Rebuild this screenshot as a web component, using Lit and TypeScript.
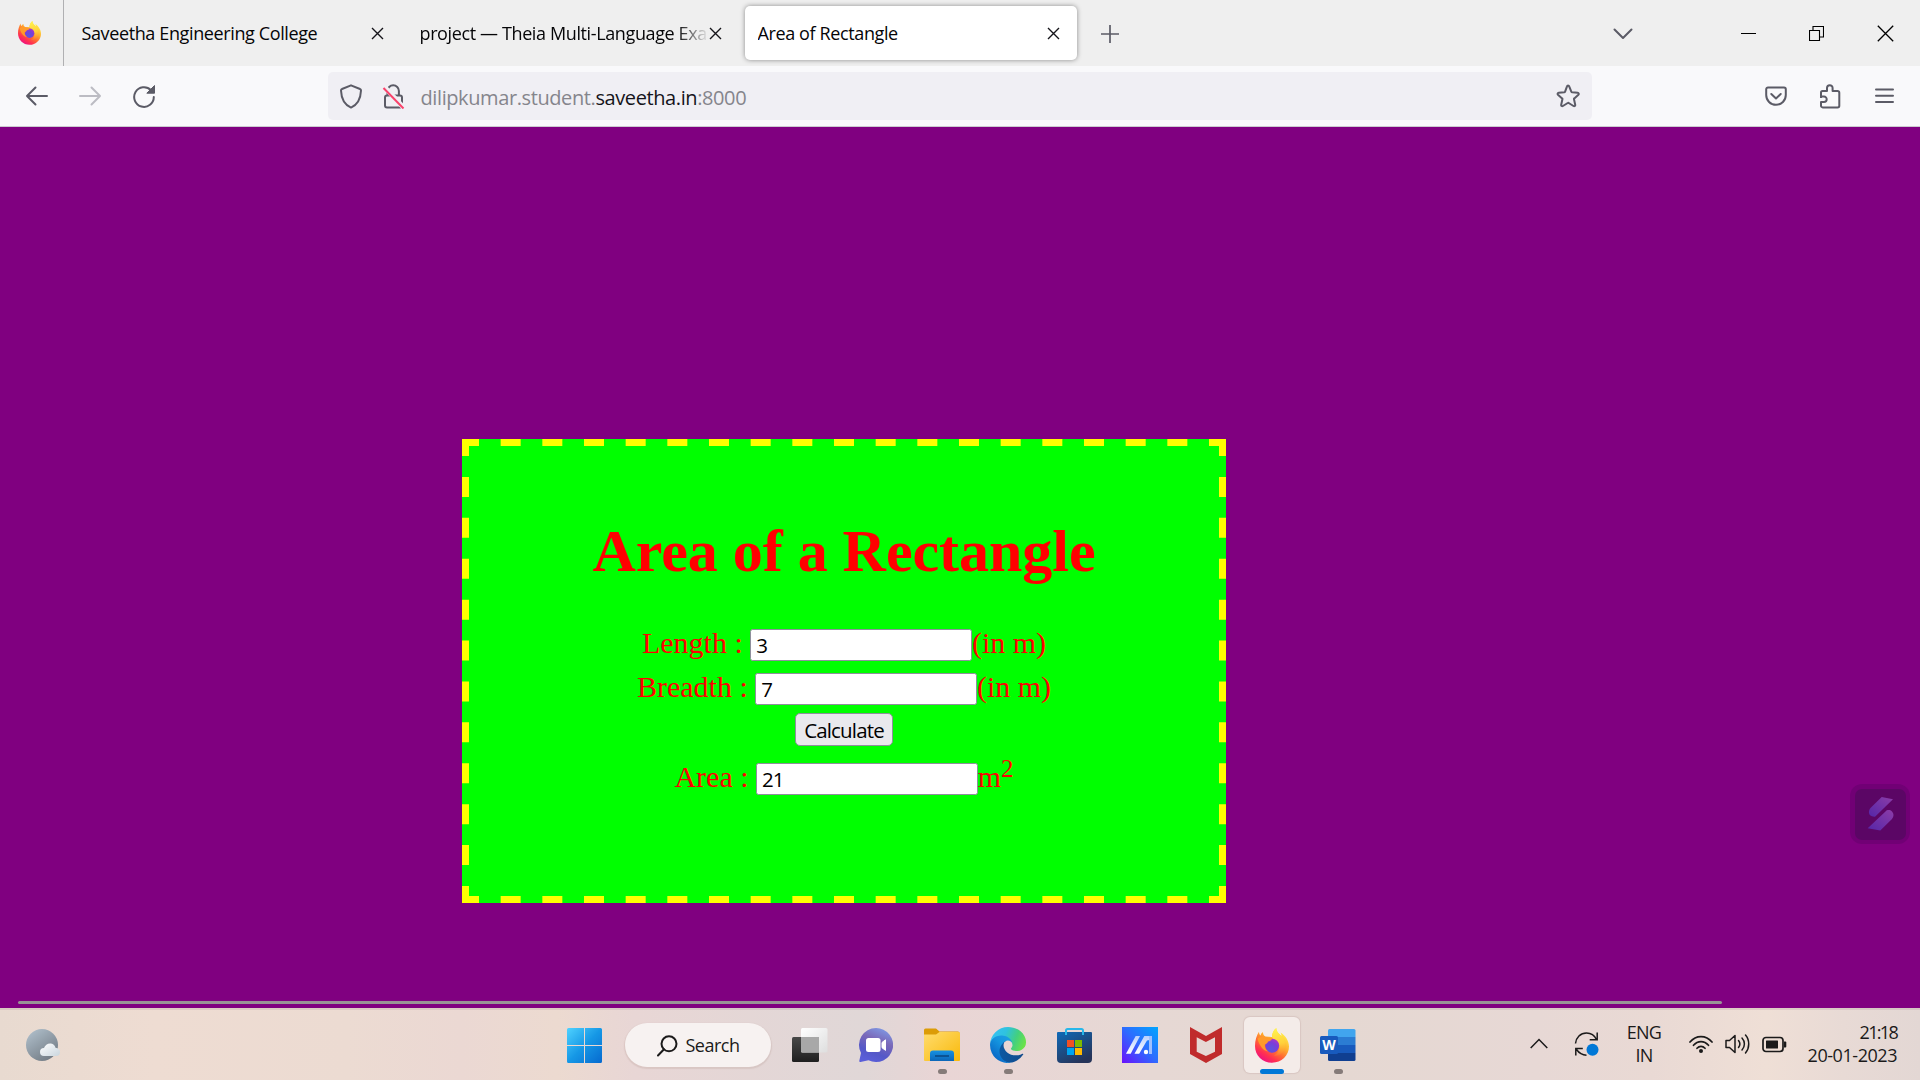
import { LitElement, html, css, svg, type TemplateResult } from "lit";
import { customElement, state } from "lit/decorators.js";
import { classMap } from "lit/directives/class-map.js";

const icon = (w: number, h: number, body: TemplateResult) =>
  html`<svg width=${w} height=${h} viewBox="0 0 ${w} ${h}" fill="none">${body}</svg>`;

const sans = css`"Open Sans", "Noto Sans", sans-serif`;

const firefox = (w: number, h: number) => html`
  <svg width=${w} height=${h} viewBox="0 0 34 35" preserveAspectRatio="none" fill="none">
    <defs>
      <linearGradient id="ffBody" x1="27" y1="4" x2="8" y2="32" gradientUnits="userSpaceOnUse">
        <stop offset="0" stop-color="#fff04a" /><stop offset=".35" stop-color="#ffb02e" />
        <stop offset=".6" stop-color="#ff6a33" /><stop offset=".82" stop-color="#ff2f52" /><stop offset="1" stop-color="#f0157c" />
      </linearGradient>
      <linearGradient id="ffFlame" x1="22" y1="0" x2="28" y2="28" gradientUnits="userSpaceOnUse">
        <stop offset="0" stop-color="#fff44f" /><stop offset=".55" stop-color="#ffd13b" /><stop offset="1" stop-color="#ff8a2b" stop-opacity=".2" />
      </linearGradient>
      <radialGradient id="ffGlobe" cx=".4" cy=".75" r=".8">
        <stop offset="0" stop-color="#5b55e0" /><stop offset=".6" stop-color="#7a3fd8" /><stop offset="1" stop-color="#b235c8" />
      </radialGradient>
    </defs>
    <path fill="url(#ffBody)" d="M4 3.800C4 6 4.800 7 5.600 7.400 6 5.600 7 4.500 8 4.200 8 6 8.600 7.400 10.500 8.600L17 9C17 5.500 18.500 2 21.300 0 21.300 3.500 24 5.800 26.500 8 26.500 6.500 26 5.500 25.500 4.500 30.500 7.500 34 13 34 18.600 34 27.500 26.500 34.800 17 34.800S0 27.500 0 18C0 12.500 1.500 7.500 4 3.800Z" />
    <path fill="url(#ffFlame)" d="M17 9C17 5.500 18.500 2 21.300 0 21.300 3.500 24 5.800 26.500 8 30 12 31.500 17 29 22.500 27 27 22 28.500 19 27.500 24 25 25.500 20 23.500 15.500 22 12 18 11.500 17 9Z" />
    <circle cx="17.200" cy="17.800" r="7" fill="url(#ffGlobe)" />
    <path fill="#ff9a2a" d="M2.500 10.500C5 8.500 9 8 12.500 9.600 14.500 9.200 16 9.600 17 10.400 16.600 12.300 14.800 13 13 13.500 12.600 15.300 11 16 9.800 16.500 9.500 19 10.800 22 13.500 23.500 8 23 4 17 2.500 10.500Z" />
  </svg>`;

const closeX = icon(13, 13, svg`<path d="M1 1l11 11M12 1L1 12" stroke="#15141a" stroke-width="1.400" />`);

@customElement("browser-tabs")
class BrowserTabs extends LitElement {
  static styles = css`
    :host { display: flex; height: 66px; background: #efefef; font: 18px/55px ${sans}; letter-spacing: -0.380px; color: #050507; }
    svg { display: block; flex: none; }
    .pinned { width: 64px; display: flex; align-items: center; padding-left: 18px; box-sizing: border-box; border-right: 1px solid #b0b0b2; }
    .tabs { display: flex; gap: 6px; padding: 6px 0 6px 5px; }
    .tab { width: 332px; height: 54px; box-sizing: border-box; display: flex; align-items: center; padding: 1px 17px 0 12.500px; border-radius: 5px; }
    .tab.active { background: #fff; box-shadow: 0 0 5px rgba(0, 0, 0, 0.42); }
    .title { flex: 1; min-width: 0; overflow: hidden; white-space: nowrap; }
    .title.long { -webkit-mask-image: linear-gradient(to left, transparent, #000 32px); mask-image: linear-gradient(to left, transparent, #000 32px); }
    .btn { width: 69px; display: flex; align-items: center; justify-content: center; padding-top: 1px; box-sizing: border-box; }
    .plus { width: 65px; }
    .spacer { flex: 1; }
    .list { width: 40px; margin-right: 70px; }
  `;
  private tabs = ["Saveetha Engineering College", "project — Theia Multi-Language Exa", "Area of Rectangle"];
  render() {
    return html`
      <div class="pinned">${firefox(23, 24)}</div>
      <div class="tabs">
        ${this.tabs.map((t, i) => html`
          <div class=${classMap({ tab: true, active: i === 2 })}>
            <span class=${classMap({ title: true, long: i === 1 })}>${t}</span>${closeX}
          </div>`)}
      </div>
      <div class="btn plus">${icon(18, 18, svg`<path d="M9 0v18M0 9h18" stroke="#5b5b66" stroke-width="1.700" />`)}</div>
      <div class="spacer"></div>
      <div class="btn list">${icon(20, 12, svg`<path d="M1.500 1.500L10 10l8.500-8.500" stroke="#5b5b66" stroke-width="2" stroke-linecap="round" stroke-linejoin="round" />`)}</div>
      <div class="btn">${icon(16, 2, svg`<path d="M1 .5h15" stroke="#000" />`)}</div>
      <div class="btn">${icon(15, 15, svg`<path d="M.5 4.500h10v10H.5zM4 4.500V.5h10.500V11H11" stroke="#000" stroke-width="1.100" />`)}</div>
      <div class="btn">${icon(17, 17, svg`<path d="M.8.8l15.400 15.400M16.200.8L.8 16.200" stroke="#000" stroke-width="1.300" />`)}</div>`;
  }
}

@customElement("browser-toolbar")
class BrowserToolbar extends LitElement {
  static styles = css`
    :host { display: flex; align-items: center; height: 61px; box-sizing: border-box; padding: 0 9px; background: #f9f9fb; border-bottom: 1px solid #cccbd0; font: 20px/48px ${sans}; letter-spacing: -0.400px; }
    svg { display: block; flex: none; }
    .btn { width: 54px; display: flex; justify-content: center; }
    .back { padding-right: 1px; box-sizing: border-box; }
    .fwd { padding-left: 1px; box-sizing: border-box; }
    .url { width: 1264px; height: 48px; margin-left: 157px; display: flex; align-items: center; border-radius: 5px; background: #f0eff4; color: #85858c; box-sizing: border-box; padding: 0 12px; }
    .lock { margin-left: 20px; }
    .address { flex: 1; margin-left: 15.500px; padding-top: 3px; }
    .host { color: #15141a; }
    .spacer { flex: 1; }
  `;
  render() {
    const c = "#5b5b66";
    return html`
      <div class="btn back">${icon(24, 20, svg`<path d="M11.500 1.500L3 10l8.500 8.500M3 10h20" stroke=${c} stroke-width="2" stroke-linecap="round" stroke-linejoin="round" />`)}</div>
      <div class="btn fwd">${icon(24, 20, svg`<path d="M12.500 1.500L21 10l-8.500 8.500M21 10H1" stroke="#bcbcc3" stroke-width="2" stroke-linecap="round" stroke-linejoin="round" />`)}</div>
      <div class="btn">${icon(24, 24, svg`<path d="M19 6.200A9.800 9.800 0 1 0 21.800 13" stroke=${c} stroke-width="2" stroke-linecap="round" /><path d="M22.500 1.500v7.700h-7.700z" fill=${c} stroke=${c} stroke-linejoin="round" />`)}</div>
      <div class="url">
        ${icon(22, 25, svg`<path d="M11 1.300l9 3.700c.8.300 1 .8 1 1.500C20.700 14 18 20.500 11 23.600 4 20.500 1.300 14 1 6.500 1 5.800 1.200 5.300 2 5z" stroke=${c} stroke-width="2" stroke-linejoin="round" />`)}
        <div class="lock">${icon(23, 25, svg`
          <path d="M5.500 11V7a5.700 5.700 0 0 1 11.400 0v4" stroke=${c} stroke-width="2" />
          <rect x="3" y="11.500" width="17" height="12" rx="2" stroke=${c} stroke-width="2" />
          <path d="M2 2.500L22 24" stroke="#f0eff4" stroke-width="5" />
          <path d="M1.500 4L21.500 24.500" stroke="#f9426b" stroke-width="2" />`)}</div>
        <div class="address">dilipkumar.student.<span class="host">saveetha.in</span>:8000</div>
        ${icon(24, 24, svg`<path d="M12 1.500c.6 0 1 .3 1.200.9l2.200 5.400c.1.300.4.500.7.500l5.600.5c1 .1 1.400 1.200.7 1.900l-4.100 3.700c-.3.200-.4.500-.3.900l1.200 5.500c.2 1-.8 1.700-1.700 1.200l-4.800-3c-.4-.2-.7-.2-1 0l-4.800 3c-.9.500-1.900-.2-1.700-1.200L6.400 15.300c.1-.4 0-.7-.3-.9L2 10.700c-.7-.7-.4-1.800.7-1.900l5.600-.5c.3 0 .6-.2.700-.5l2-5.400c.2-.6.5-.9 1-.9z" stroke=${c} stroke-width="2" stroke-linejoin="round" />`)}
      </div>
      <div class="spacer"></div>
      <div class="btn">${icon(22, 21, svg`<path d="M3 1.500h16a1.800 1.800 0 0 1 1.800 1.800V9a9.800 9.800 0 0 1-19.600 0V3.300A1.800 1.800 0 0 1 3 1.500z" stroke=${c} stroke-width="2" /><path d="M6.300 8L11 12.500 15.700 8" stroke=${c} stroke-width="2" stroke-linecap="round" stroke-linejoin="round" />`)}</div>
      <div class="btn">${icon(22, 26, svg`<path d="M2 15V9.500A1.500 1.500 0 0 1 3.500 8H8V5a2.800 2.800 0 0 1 5.600 0v3h5a1.700 1.700 0 0 1 1.700 1.700v13a1.700 1.700 0 0 1-1.700 1.700H3.700A1.700 1.700 0 0 1 2 22.700V19h3a2.700 2.700 0 0 0 0-5.400H2" stroke=${c} stroke-width="2" stroke-linejoin="round" />`)}</div>
      <div class="btn">${icon(19, 16, svg`<path d="M1 1.500h17M1 7.700h17M1 13.900h17" stroke=${c} stroke-width="2" stroke-linecap="round" />`)}</div>`;
  }
}

@customElement("area-calculator")
class AreaCalculator extends LitElement {
  static styles = css`
    :host { display: block; position: relative; box-sizing: border-box; width: 764px; height: 464px; padding: 78px 7px 7px; background: #00ff00; color: #ff0000; font: 30px/44px "Liberation Serif", serif; }
    .dashes { position: absolute; inset: 0; display: block; }
    h1 { margin: 0 0 36px; font-size: 60px; line-height: 68px; font-weight: bold; text-align: center; letter-spacing: -0.030px; }
    .row { display: flex; justify-content: center; height: 44px; white-space: pre; }
    input { width: 221.700px; height: 32px; margin: 8px 0 0; box-sizing: border-box; border: 1px solid #8f8f9d; border-radius: 2.500px; padding: 0 5px 1px; background: #fff; color: #000; outline: none; font: 20.500px ${sans}; letter-spacing: -0.900px; }
    .submit { display: flex; justify-content: center; padding-top: 4px; height: 42px; box-sizing: content-box; }
    button { width: 97.500px; height: 32.500px; box-sizing: border-box; padding: 1px 0 0; border: 1px solid #8f8f9d; border-radius: 5px; background: #e9e9ed; color: #000; font: 20.500px ${sans}; letter-spacing: -0.850px; white-space: nowrap; }
    sup { font-size: 25px; line-height: 0; position: relative; top: -10px; vertical-align: baseline; }
  `;
  @state() private length = 3;
  @state() private breadth = 7;
  @state() private area = 21;
  private calculate() { this.area = this.length * this.breadth; }
  render() {
    return html`
      <svg class="dashes" width="764" height="464" stroke="#ffff00" stroke-width="7">
        <path d="M0 3.500H764M0 460.500H764" stroke-dasharray="20 21.667" stroke-dashoffset="3" />
        <path d="M3.500 0V464M760.500 0V464" stroke-dasharray="20 20.909" stroke-dashoffset="3" />
      </svg>
      <h1>Area of a Rectangle</h1>
      <div class="row"><span>Length : </span><input .value=${String(this.length)} @input=${(e: any) => (this.length = +e.target.value)} /><span>(in m)</span></div>
      <div class="row"><span>Breadth : </span><input .value=${String(this.breadth)} @input=${(e: any) => (this.breadth = +e.target.value)} /><span>(in m)</span></div>
      <div class="submit"><button @click=${this.calculate}>Calculate</button></div>
      <div class="row"><span>Area : </span><input readonly .value=${String(this.area)} /><span>m<sup>2</sup></span></div>`;
  }
}

const apps: { name: string; art: TemplateResult; mark?: string }[] = [
  { name: "Task view", art: icon(36, 36, svg`
    <defs><linearGradient id="tvD" x1="0" y1="0" x2="0" y2="1"><stop stop-color="#484848" /><stop offset="1" stop-color="#1f1f1f" /></linearGradient>
    <linearGradient id="tvL" x1="0" y1="0" x2="1" y2="1"><stop stop-color="#fff" /><stop offset="1" stop-color="#dedede" /></linearGradient></defs>
    <rect x="0" y="10" width="27" height="25" rx="1.500" fill="url(#tvD)" /><rect x="9" y="1" width="26.500" height="24.500" rx="1.500" fill="url(#tvL)" /><path d="M9 10h18v15.500H10.500A1.500 1.500 0 0 1 9 24z" fill="#a8a8a8" />`) },
  { name: "Chat", art: icon(34, 34, svg`
    <defs><linearGradient id="ch" x1=".8" y1="0" x2=".4" y2="1"><stop stop-color="#7f9de8" /><stop offset=".4" stop-color="#7a68b8" /><stop offset=".75" stop-color="#5458c8" /><stop offset="1" stop-color="#5a5ed8" /></linearGradient></defs>
    <path d="M17 0a17 17 0 1 1-7.500 32.200L1.500 34c-1 .2-1.400-.4-1.200-1.300L2 25A17 17 0 0 1 17 0z" fill="url(#ch)" />
    <rect x="7" y="10" width="14.500" height="14" rx="2.500" fill="#fff" /><path d="M23 14.500l3.500-2.700v10.600L23 19.700z" fill="#fff" stroke="#fff" stroke-linejoin="round" />`) },
  { name: "Files", mark: "run", art: icon(36, 34, svg`
    <defs><linearGradient id="fo" x1="0" y1="0" x2="1" y2="1"><stop stop-color="#ffdc6e" /><stop offset="1" stop-color="#f9b90a" /></linearGradient>
    <linearGradient id="fb" x1="0" y1="0" x2="0" y2="1"><stop stop-color="#1591e2" /><stop offset="1" stop-color="#0c66b8" /></linearGradient></defs>
    <path d="M0 2A1.500 1.500 0 0 1 1.500.5H12L15.500 3.500H34A1.500 1.500 0 0 1 35.500 5V9H0z" fill="#dc9c07" /><path d="M0 6.500H12L15.500 4H34.500A1.500 1.500 0 0 1 36 5.500V32A1 1 0 0 1 35 33H1A1 1 0 0 1 0 32z" fill="url(#fo)" />
    <path d="M6 33V25.500A3 3 0 0 1 9 22.500H27A3 3 0 0 1 30 25.500V33z" fill="url(#fb)" /><path d="M11 28H25" stroke="#094a86" stroke-width="1.600" />`) },
  { name: "Edge", mark: "run", art: html`<svg width="36" height="36" viewBox="4.630 4.920 256 256">
    <defs><linearGradient id="e1" x1="63" y1="177" x2="241" y2="177" gradientUnits="userSpaceOnUse"><stop stop-color="#0c59a4" /><stop offset="1" stop-color="#114a8b" /></linearGradient>
    <linearGradient id="e2" x1="157" y1="100" x2="46" y2="221" gradientUnits="userSpaceOnUse"><stop stop-color="#1b9de2" /><stop offset=".4" stop-color="#1595df" /><stop offset="1" stop-color="#0a6cc8" /></linearGradient>
    <linearGradient id="e3" x1="20" y1="60" x2="240" y2="150" gradientUnits="userSpaceOnUse"><stop stop-color="#35c1f1" /><stop offset=".35" stop-color="#2fc2df" /><stop offset=".7" stop-color="#43d07e" /><stop offset="1" stop-color="#6be24a" /></linearGradient></defs>
    <path fill="url(#e1)" d="M235.680 195.460a93.730 93.730 0 0 1-10.540 4.710 101.870 101.870 0 0 1-35.900 6.460c-47.320 0-88.540-32.550-88.540-74.320A31.480 31.480 0 0 1 117.130 105c-42.800 1.800-53.800 46.400-53.800 72.530 0 73.880 68.090 81.370 82.760 81.370 7.910 0 19.840-2.300 27-4.560l1.310-.44a128.340 128.340 0 0 0 66.600-52.800 4 4 0 0 0-5.320-5.640z" />
    <path fill="url(#e2)" d="M110.340 246.340A79.200 79.200 0 0 1 87.600 225a80.720 80.720 0 0 1 29.530-120c3.120-1.470 8.450-4.130 15.540-4a32.350 32.350 0 0 1 25.690 13 31.880 31.880 0 0 1 6.360 18.660c0-.21 24.460-79.600-80-79.600-43.900 0-80 41.660-80 78.210a130.150 130.150 0 0 0 12.110 56 128 128 0 0 0 156.380 67.110 75.550 75.550 0 0 1-62.780-8z" />
    <path fill="url(#e3)" d="M156.940 153.780c-.81 1.050-3.300 2.500-3.300 5.660 0 2.610 1.700 5.120 4.720 7.230 14.380 10 41.490 8.680 41.560 8.680a59.560 59.560 0 0 0 30.270-8.350A61.380 61.380 0 0 0 260.630 113c.26-22.410-8-37.310-11.340-43.910C228.120 27.810 182.420 4.920 132.630 4.920A128 128 0 0 0 4.630 131.100c.48-36.540 36.800-66.050 80-66.050 3.500 0 23.460.34 42 10.070 16.340 8.580 24.900 18.940 30.850 29.210 6.180 10.670 7.280 24.150 7.280 29.520s-2.740 13.330-7.820 19.930z" /></svg>` },
  { name: "Store", art: icon(35, 35, svg`
    <defs><linearGradient id="st" x1="0" y1="0" x2=".6" y2="1"><stop stop-color="#0f6ab8" /><stop offset="1" stop-color="#263459" /></linearGradient></defs>
    <path d="M0 5A1 1 0 0 1 1 4H34A1 1 0 0 1 35 5V31A4 4 0 0 1 31 35H4A4 4 0 0 1 0 31z" fill="url(#st)" /><path d="M9 7V2.500A1.500 1.500 0 0 1 10.500 1H24.500A1.500 1.500 0 0 1 26 2.500V7" stroke="#28b7ea" stroke-width="2" />
    <path d="M10 12h7v7h-7z" fill="#f25022" /><path d="M18 12h7v7h-7z" fill="#7fba00" /><path d="M10 20h7v7h-7z" fill="#00a4ef" /><path d="M18 20h7v7h-7z" fill="#ffb900" />`) },
  { name: "MyASUS", art: icon(36, 36, svg`
    <defs><linearGradient id="ma" x1="1" y1="0" x2="0" y2="1"><stop stop-color="#00a6ff" /><stop offset=".5" stop-color="#2e6bff" /><stop offset="1" stop-color="#6a10fb" /></linearGradient>
    <linearGradient id="mw" x1="0" y1="1" x2="0" y2="0"><stop stop-color="#fff" /><stop offset="1" stop-color="#b9d0ff" /></linearGradient></defs>
    <path d="M0 0h36v36H0z" fill="url(#ma)" /><path d="M4 26.700L13.700 9H18L8.700 26.700z" fill="url(#mw)" /><path d="M12.500 26.700L22.300 9H30L27.500 13 25 13.500 17.200 26.700z" fill="url(#mw)" /><path d="M27 9h3v18h-3z" fill="#9fc0ff" /><circle cx="24" cy="25" r="2.200" fill="#fff" />`) },
  { name: "McAfee", art: icon(32, 36, svg`<path fill="#c02b2c" fill-rule="evenodd" d="M0 0L16 9 32 0V27L16 36 0 27zM6.700 10.300V24.700L15.900 29 25 24.700V10.300L15.900 15z" />`) },
  { name: "Firefox", mark: "active", art: firefox(34, 35) },
  { name: "Word", mark: "run", art: icon(36, 34, svg`
    <path d="M8 2.500A1.500 1.500 0 0 1 9.500 1H34A1.500 1.500 0 0 1 35.500 2.500V9H8z" fill="#41a5ee" /><path d="M8 9h27.500v8H8z" fill="#2b7cd3" /><path d="M8 17h27.500v8H8z" fill="#185abd" /><path d="M8 25h27.500v6.500A1.500 1.500 0 0 1 34 33H9.500A1.500 1.500 0 0 1 8 31.500z" fill="#103f91" />
    <rect x="0" y="8" width="18" height="18" rx="1.500" fill="#185abd" /><text x="9" y="22" fill="#fff" font-family="Open Sans, sans-serif" font-weight="700" font-size="14" letter-spacing="0" text-anchor="middle">W</text>`) },
];

@customElement("task-bar")
class TaskBar extends LitElement {
  static styles = css`
    :host { display: flex; align-items: center; height: 72px; box-sizing: border-box; padding: 2px 23px 0 26px; color: #1b1a1a; font: 18px/23px ${sans}; letter-spacing: -0.400px;
      background: linear-gradient(90deg, #e8dad0 0, #eedcd2 8%, #ecdbd2 18%, #ebd8d3 24%, #ecdad0 29%, #e8d6d5 33%, #e0d7d7 45%, #e9d5d5 49%, #e6d8d4 60%, #e5d8d2 70%, #e7d8d5 80%, #e9d9d4 86%, #efdfd6 92%, #e8dad5 96%, #e3d7d4 100%); box-shadow: inset 0 2px rgba(150, 130, 125, 0.18); }
    svg { display: block; flex: none; }
    .start { width: 66px; margin-left: 491.500px; }
    .slot { width: 66px; height: 70px; display: flex; align-items: center; justify-content: center; flex: none; position: relative; }
    .search { width: 146px; height: 44px; margin: 0 6px 0 7.500px; box-sizing: border-box; padding: 1px 0 0 32px; border-radius: 22px; background: #f7f2f1; box-shadow: 0 1px 1px 1px rgba(180, 150, 145, 0.25); display: flex; align-items: center; gap: 7.500px; letter-spacing: -0.500px; flex: none; }
    .active::before { content: ""; position: absolute; left: 5px; top: 7px; width: 56px; height: 56px; border-radius: 6px; background: #f4ece9; box-shadow: 0 0 1px 1px rgba(190, 160, 155, 0.3); }
    .slot svg { position: relative; }
    .run::after, .active::after { content: ""; position: absolute; bottom: 6px; left: 28.500px; width: 9px; height: 5px; border-radius: 2.500px; background: #857b79; }
    .active::after { left: 21px; width: 24px; background: #0078d7; }
    .chevron { margin-left: 159px; margin-top: -3px; }
    .sync { margin-left: 26px; margin-top: -2px; }
    .lang { width: 50px; margin-left: 19px; text-align: center; letter-spacing: -0.700px; }
    .status { display: flex; align-items: center; gap: 12px; margin: -2px 0 0 20px; }
    .clock { flex: 1; text-align: right; white-space: nowrap; letter-spacing: -0.450px; }
    .time { letter-spacing: -1.700px; }
    .lang, .clock { padding-bottom: 2px; }
  `;
  render() {
    const k = "#1b1a1a";
    return html`
      ${icon(34, 32, svg`
        <defs><linearGradient id="mo" x1="0" y1="0" x2=".7" y2="1"><stop stop-color="#b4c4d0" /><stop offset="1" stop-color="#737c85" /></linearGradient>
        <linearGradient id="cl" x1="0" y1="0" x2="1" y2="1"><stop stop-color="#fff" /><stop offset="1" stop-color="#c9d5dd" /></linearGradient></defs>
        <circle cx="16" cy="16" r="16" fill="url(#mo)" /><path d="M18 27a4 4 0 0 1 0-8c1-3 4-5 7-4.500 2.500.3 4 2 4.500 4.200C32.500 18.800 34 21 34 23a4 4 0 0 1-4 4z" fill="url(#cl)" />`)}
      <div class="slot start">${icon(35, 35, svg`
        <defs><linearGradient id="w" x1="0" y1="0" x2="35" y2="35" gradientUnits="userSpaceOnUse"><stop stop-color="#4fd2ff" /><stop offset=".5" stop-color="#1698e6" /><stop offset="1" stop-color="#0669cf" /></linearGradient></defs>
        <path d="M1.500 0H17v17H0V1.500A1.500 1.500 0 0 1 1.500 0zM18 0H33.500A1.500 1.500 0 0 1 35 1.500V17H18zM0 18H17V35H1.500A1.500 1.500 0 0 1 0 33.500zM18 18H35V33.500A1.500 1.500 0 0 1 33.500 35H18z" fill="url(#w)" />`)}</div>
      <div class="search">${icon(21, 22, svg`<circle cx="12" cy="8.800" r="7.500" stroke=${k} stroke-width="2" /><path d="M7 14.300L1 20.500" stroke=${k} stroke-width="2" stroke-linecap="round" />`)}<span>Search</span></div>
      ${apps.map((a) => html`<div class=${classMap({ slot: true, run: a.mark === "run", active: a.mark === "active" })}>${a.art}</div>`)}
      <div class="chevron">${icon(18, 11, svg`<path d="M.7 10L9 1.500 17.300 10" stroke=${k} stroke-width="1.500" />`)}</div>
      <div class="sync">${icon(26, 26, svg`<path d="M1.500 12.500C2 6.500 6.500 2 12.500 2c4.500 0 8 2.300 10 6.500M23.200 1.500v7.300h-7.500M1.800 24.500v-7h7M2.500 18.500C5 22 8 24 12.500 24.300" stroke=${k} stroke-width="1.500" /><circle cx="18.500" cy="18.700" r="6" fill="#0078d7" />`)}</div>
      <div class="lang">ENG<br />IN</div>
      <div class="status">
        ${icon(24, 19, svg`<g stroke=${k} stroke-width="1.700" stroke-linecap="round"><path d="M1 7C7-.3 17-.3 23 7M4.500 10.300c4.300-5 10.700-5 15 0M8 13.300c2.300-2.600 5.700-2.600 8 0" /></g><circle cx="12" cy="16" r="2" fill=${k} />`)}
        ${icon(25, 22, svg`<g stroke=${k} stroke-width="1.500" stroke-linejoin="round" stroke-linecap="round"><path d="M1 7.500H4.500L10 2.500v17L4.500 14.500H1z" /><path d="M13.500 7.500c1.600 2 1.600 5 0 7M17 5c3.200 3.500 3.200 8.500 0 12M20.500 2c4.300 5 4.300 13 0 18" /></g>`)}
        ${icon(25, 17, svg`<rect x="1" y="1.500" width="20" height="14" rx="3" stroke=${k} stroke-width="1.700" /><rect x="4" y="4.500" width="12" height="8" rx=".5" fill=${k} /><path d="M22 5.500h1.300a1 1 0 0 1 1 1v4a1 1 0 0 1-1 1H22z" fill=${k} />`)}
      </div>
      <div class="clock"><span class="time">21:18</span><br />20-01-2023</div>`;
  }
}

@customElement("app-root")
class AppRoot extends LitElement {
  static styles = css`
    :host { display: flex; flex-direction: column; width: 1920px; height: 1080px; overflow: hidden; }
    .page { flex: 1; position: relative; background: #800080; display: flex; flex-direction: column; justify-content: space-between; padding: 312px 0 4px 18px; box-sizing: border-box; }
    area-calculator { margin-left: 444px; }
    .scrollbar { width: 1704px; height: 3px; border-radius: 2px; background: #999396; }
    .badge { position: absolute; left: 1850px; top: 657px; }
  `;
  render() {
    return html`
      <browser-tabs></browser-tabs>
      <browser-toolbar></browser-toolbar>
      <main class="page">
        <area-calculator></area-calculator>
        <div class="scrollbar"></div>
        <svg class="badge" width="60" height="60" viewBox="0 0 60 60">
          <defs><linearGradient id="s" x1="1" y1="0" x2="0" y2="1"><stop stop-color="#8c3da8" /><stop offset="1" stop-color="#5526a8" /></linearGradient></defs>
          <rect width="60" height="60" rx="12" fill="#710075" /><rect x="5" y="5" width="51" height="51" rx="7" fill="#5b0665" />
          <path d="M31.700 13L43 15.300 25 32.700C21 33 18.500 30.500 19 27.500 19.200 25.500 20 24.500 21.500 23z" fill="url(#s)" />
          <path d="M17.700 44.300L35.500 27.500C37 25.700 40 25.500 42 27.500 44 29.500 44 32.500 42 35L30.300 46.500z" fill="url(#s)" />
        </svg>
      </main>
      <task-bar></task-bar>`;
  }
}
